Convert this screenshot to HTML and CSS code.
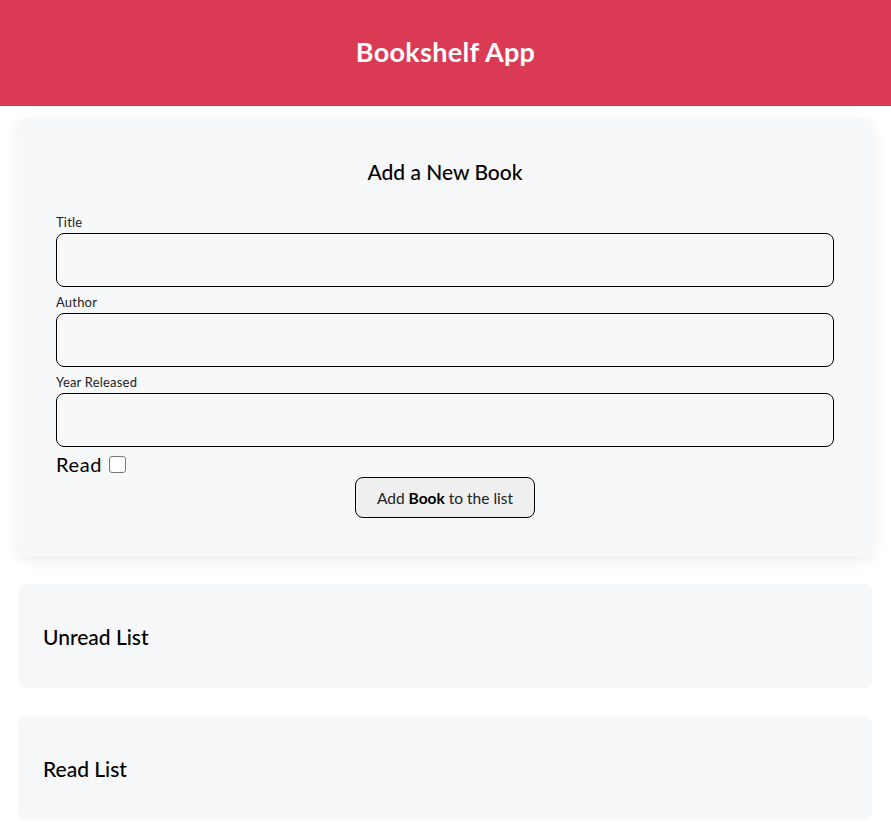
FILE: index.html
```html
<!DOCTYPE html>
<html>
<head>
<meta charset="utf-8">
<link rel="stylesheet" href="styles.css">
</head>
<body>
<header class="head"><h1 class="title">Bookshelf App</h1></header>
<main class="main">
  <section class="card form-card">
    <h2 class="form-title">Add a New Book</h2>
    <form class="form">
      <div class="field">
        <label class="label">Title</label>
        <input class="input" type="text">
      </div>
      <div class="field">
        <label class="label">Author</label>
        <input class="input" type="text">
      </div>
      <div class="field">
        <label class="label">Year Released</label>
        <input class="input" type="text">
      </div>
      <div class="read-row">
        <label class="read-label">Read</label>
        <span class="check"></span>
      </div>
      <div class="btn-row">
        <button class="btn" type="button">Add <b>Book</b> to the list</button>
      </div>
    </form>
  </section>
  <section class="card list-card"><h2 class="list-title">Unread List</h2></section>
  <section class="card list-card"><h2 class="list-title">Read List</h2></section>
</main>
</body>
</html>
```
FILE: styles.css
```css
* { box-sizing: border-box; }
body {
  margin: 0;
  font-family: "Lato", "Open Sans", sans-serif;
  color: #000;
  background: #fff;
}
.head {
  background: #db3a55;
  height: 106px;
  display: flex;
  align-items: center;
  justify-content: center;
}
.title {
  margin: 0;
  padding-bottom: 3px;
  color: #fff;
  font-size: 27px;
  font-weight: 700;
  letter-spacing: 0.3px;
}
.main {
  padding: 13px 19px 20px 18px;
  display: flex;
  flex-direction: column;
  gap: 28px;
}
.card {
  background: #f7f8fa;
  border-radius: 8px;
}
.form-card {
  padding: 40px 38px 38px;
  box-shadow: 0 4px 16px rgba(0, 0, 0, 0.08);
}
.form-title {
  margin: 0 0 31px;
  text-align: center;
  font-size: 21px;
  font-weight: 500;
}
.form { display: flex; flex-direction: column; }
.field { display: flex; flex-direction: column; }
.label {
  font-size: 13px;
  color: #222;
  line-height: 14px;
  margin-bottom: 4px;
  letter-spacing: 0.2px;
}
.input {
  height: 54px;
  border: 1px solid #000;
  border-radius: 8px;
  background: #f8f8f8;
  margin: 0 0 8px;
}
.read-row {
  display: flex;
  align-items: center;
  gap: 7px;
  height: 22px;
  margin-top: -2px;
}
.read-label { font-size: 20px; letter-spacing: 0.6px; }
.check {
  width: 17px;
  height: 17px;
  border: 1px solid #777;
  border-radius: 3px;
  background: #fff;
}
.btn-row { display: flex; justify-content: center; margin-top: 2px; }
.btn {
  width: 180px;
  height: 41px;
  border: 1px solid #000;
  border-radius: 8px;
  background: #efefef;
  font-family: inherit;
  font-size: 15.5px;
  color: #222;
}
.btn b { color: #000; }
.list-card {
  height: 104px;
  padding: 0 25px;
  display: flex;
  align-items: center;
}
.list-title {
  margin: 0;
  font-size: 21px;
  font-weight: 500;
}
```
